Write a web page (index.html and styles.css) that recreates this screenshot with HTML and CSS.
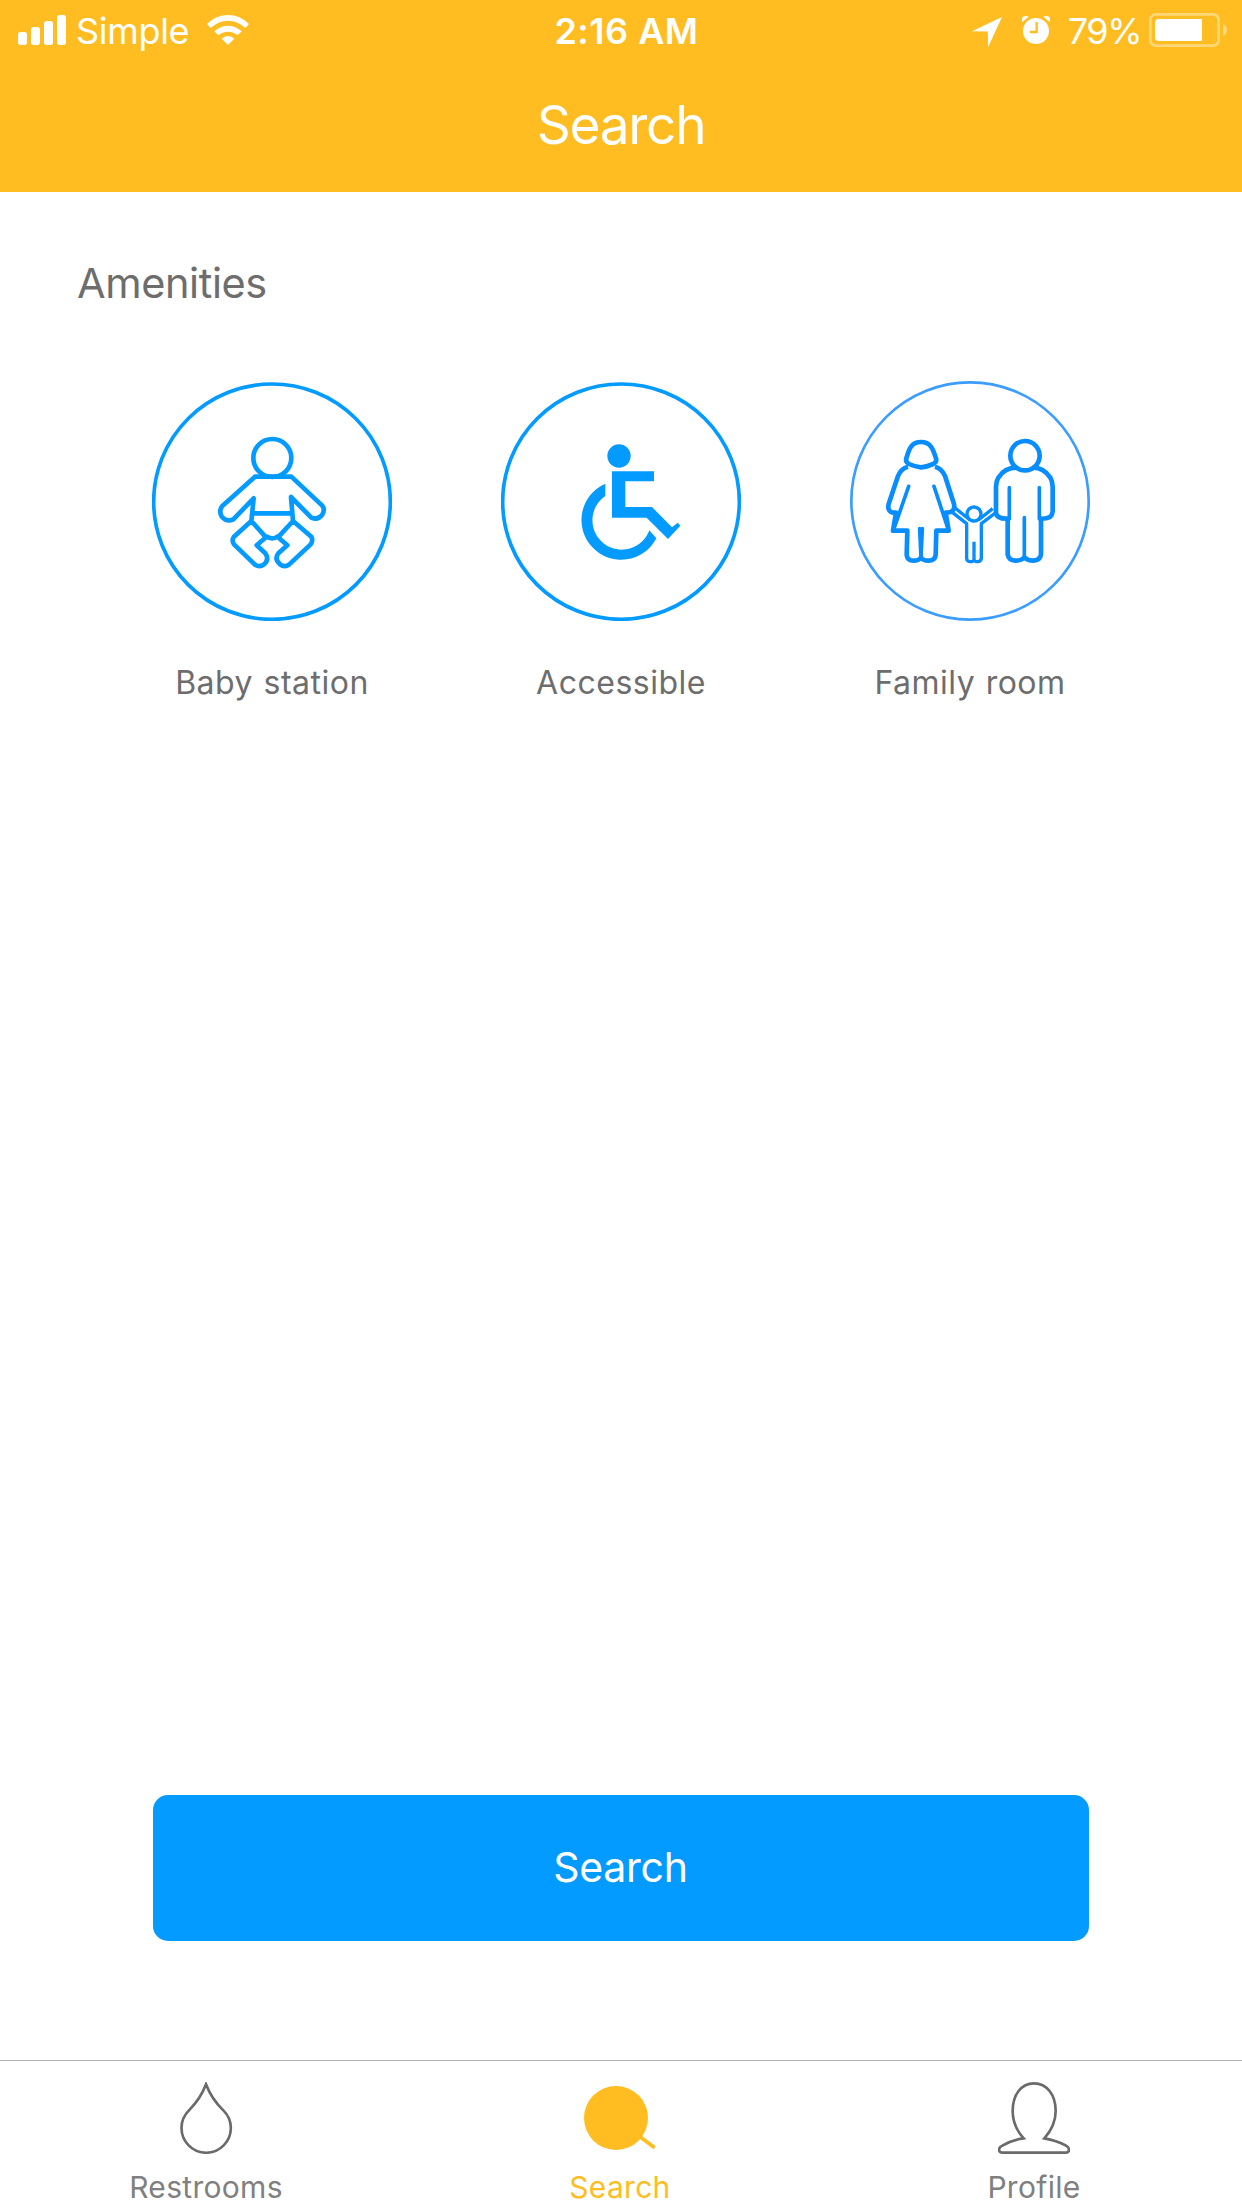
FILE: index.html
```html
<!DOCTYPE html>
<html lang="en">
<head>
  <meta charset="UTF-8">
  <meta name="viewport" content="width=device-width, initial-scale=1.0">
  <title>Search</title>
  <link rel="stylesheet" href="styles.css">
</head>
<body>

  <header class="header">
    <div class="status-bar">
      <div class="status-left">
        <svg class="signal" viewBox="0 0 48 30">
          <rect x="0" y="17" width="9" height="13" rx="2.7"/>
          <rect x="13" y="12" width="9" height="18" rx="2.7"/>
          <rect x="26" y="6" width="9" height="24" rx="2.7"/>
          <rect x="39" y="0" width="9" height="30" rx="2.7"/>
        </svg>
        <span class="carrier">Simple</span>
        <svg class="wifi" viewBox="621 45 126 90">
          <path d="M621 72Q648 45 684 45T747 72L736 84Q712 62 684 62T632 84Z"/>
          <path d="M643 94Q661 77 684 77T725 94L713 106Q700 95 684 95T655 106Z"/>
          <path d="M665 116Q673 108 684 108T703 116L684 135Z"/>
        </svg>
      </div>
      <span class="time">2:16 AM</span>
      <div class="status-right">
        <svg class="location" viewBox="66 46 91 91">
          <path d="M157 46L115 137L114 90L66 89Z"/>
        </svg>
        <svg class="alarm" viewBox="216 48 84 84">
          <circle cx="258" cy="93" r="39"/>
          <path d="M216 67V55Q218 48 227 48Q233 48 236 50ZM300 67V55Q298 48 289 48Q283 48 280 50Z"/>
          <path class="alarm-hands" d="M260 66V96H240"/>
        </svg>
        <span class="percent">79%</span>
        <svg class="battery" viewBox="597 39 234 102">
          <rect class="battery-shell" x="601" y="43" width="205" height="94" rx="17"/>
          <path class="battery-cap" d="M819 71Q831 77 831 90T819 109Z"/>
          <path d="M756 57H626Q615 57 615 68V112Q615 123 626 123H756Z"/>
        </svg>
      </div>
    </div>
    <h1 class="title">Search</h1>
  </header>

  <main class="content">
    <h2 class="section-title">Amenities</h2>

    <div class="amenities">
      <div class="amenity">
        <svg class="amenity-icon" viewBox="36 33 720 720">
          <ellipse class="ring" cx="396" cy="395" rx="355" ry="353"/>
          <g class="baby">
            <circle cx="397" cy="264" r="57"/>
            <path d="M345 320H454L546 406Q556 418 547 434Q534 452 514 443L453 381L459 453L514 500Q520 512 512 523L448 583Q434 594 420 583Q402 567 415 550L442 526L414 502L459 453M345 320L247 408Q235 423 246 441Q261 457 280 448L341 385L334 453L282 500Q274 512 282 523L344 583Q358 594 372 583Q389 567 376 550L350 526L378 502L334 453M338 430H456M378 499Q397 511 414 499"/>
          </g>
        </svg>
        <div class="amenity-name">Baby station</div>
      </div>

      <div class="amenity">
        <svg class="amenity-icon" viewBox="33 33 720 720">
          <ellipse class="ring" cx="393" cy="395" rx="355" ry="353"/>
          <g class="wheelchair">
            <circle cx="387" cy="258" r="35"/>
            <path d="M366 304H492V334H406V411H486L546 472L563 458L571 467L534 507L470 443H366Z"/>
            <path d="M346 341V378A88 88 0 1 0 478 481L499 505A119 119 0 1 1 346 341Z"/>
          </g>
        </svg>
        <div class="amenity-name">Accessible</div>
      </div>

      <div class="amenity">
        <svg class="amenity-icon" viewBox="30 33 720 720">
          <circle class="ring ring-thin" cx="390" cy="393" r="356"/>
          <g class="family">
            <!-- woman -->
            <path d="M207 282Q194 275 200 262C207 237 214 216 243 216S279 237 287 262Q293 275 280 282Q262 290 243 292Q224 290 207 282Z"/>
            <path d="M204 290Q183 295 174 318L146 402Q140 429 168 428L165 446L159 482H202L200 555Q202 572 221 572Q237 572 243 562Q249 572 265 572Q285 572 287 555L289 482H326L317 428Q347 429 342 402L315 318Q305 295 285 290"/>
            <path class="thin" d="M206 349L164 470M282 349L322 470M239 476L243 562L247 476"/>
            <!-- child -->
            <g class="child">
              <circle cx="402" cy="432" r="21"/>
              <path d="M338 428L380 461V566Q381 575 391 575Q400 575 402 569Q404 575 413 575Q422 575 424 566V461L466 429M344 413L390 450M458 416L415 450M402 515V568"/>
            </g>
            <!-- man -->
            <circle cx="555" cy="257" r="44"/>
            <path d="M529 293Q494 293 475 323Q468 335 468 350V429Q471 447 503 446V553Q506 571 526 572Q545 572 553 562Q563 572 580 572Q601 571 603 553V446Q636 448 638 425V350Q638 335 631 323Q611 293 579 293"/>
            <path class="thin" d="M508 353V447M598 353V447M553 443V562"/>
          </g>
        </svg>
        <div class="amenity-name">Family room</div>
      </div>
    </div>

    <button class="search-button" type="button">Search</button>
  </main>

  <nav class="tab-bar">
    <a class="tab">
      <svg class="tab-icon" viewBox="210 126 216 216">
        <path d="M318 133C306 165 285 193 267 211A74 74 0 1 0 370 211C351 193 330 165 318 133Z"/>
      </svg>
      <span class="tab-name">Restrooms</span>
    </a>
    <a class="tab active">
      <svg class="tab-icon" viewBox="132 126 216 216">
        <circle class="lens" cx="228" cy="234" r="96"/>
        <path d="M300 290L344 323"/>
      </svg>
      <span class="tab-name">Search</span>
    </a>
    <a class="tab">
      <svg class="tab-icon" viewBox="117 126 216 216">
        <path d="M194 295C176 275 161 247 161 213C161 164 187 130 225 130S290 164 290 213C290 247 274 275 256 295Q293 301 321 317Q330 322 330 329Q330 338 320 338H131Q120 338 120 329Q120 322 130 317Q160 299 194 295Z"/>
      </svg>
      <span class="tab-name">Profile</span>
    </a>
  </nav>

</body>
</html>
```

FILE: styles.css
```css
* {
  box-sizing: border-box;
}

body {
  font-family: Inter, 'Liberation Sans', sans-serif;
  background-color: #fff;
  color: #6d6d6d;
  margin: 0;
  height: 2208px;
  display: flex;
  flex-direction: column;
}

svg {
  display: block;
  flex: none;
}

/* Header */
.header {
  height: 192px;
  background-color: #ffbd21;
  color: #fff;
  fill: #fff;
}

.status-bar {
  height: 63px;
  padding: 0 15px 0 18px;
  display: grid;
  grid-template-columns: 1fr auto 1fr;
  align-items: center;
  font-size: 36px;
  line-height: 63px;
}

.status-left,
.status-right {
  display: flex;
  align-items: center;
}

.status-right {
  justify-content: flex-end;
}

.signal {
  width: 48px;
  height: 30px;
  margin-top: -3px;
}

.carrier {
  width: 129px;
  margin-left: 10px;
  letter-spacing: -0.3px;
}

.wifi {
  width: 42px;
  height: 30px;
  margin-left: 2px;
  margin-top: -3px;
}

.time {
  font-weight: 600;
  letter-spacing: 0.5px;
  padding-left: 8px;
}

.location {
  width: 30px;
  height: 30px;
  margin-right: 20px;
}

.alarm {
  width: 28px;
  height: 28px;
  margin-right: 18px;
  margin-top: -3px;
}

.alarm-hands {
  fill: none;
  stroke: #ffbd21;
  stroke-width: 7;
}

.percent {
  letter-spacing: -1.5px;
  margin-right: 8px;
}

.battery {
  width: 78px;
  height: 34px;
  margin-top: -3px;
}

.battery-shell {
  fill: none;
  stroke: rgba(255, 255, 255, 0.4);
  stroke-width: 8;
}

.battery-cap {
  fill: rgba(255, 255, 255, 0.4);
}

.title {
  margin: 0;
  font-size: 53px;
  font-weight: 400;
  letter-spacing: -1.2px;
  line-height: 124px;
  text-align: center;
}

/* Content */
.content {
  flex: 1;
  display: flex;
  flex-direction: column;
  padding: 60px 152px 119px;
}

.section-title {
  margin: 0 0 0 -75px;
  font-size: 41.5px;
  font-weight: 400;
  letter-spacing: -0.4px;
  line-height: 62px;
}

.amenities {
  display: flex;
  justify-content: space-between;
  margin-top: 67px;
}

.amenity {
  width: 240px;
}

.amenity-icon {
  width: 240px;
  height: 240px;
  fill: none;
  stroke: #039bff;
  stroke-linejoin: round;
}

.ring {
  stroke-width: 11;
}

.ring-thin {
  stroke: #3a9dff;
  stroke-width: 8;
}

.baby {
  stroke-width: 14;
  stroke-linecap: round;
}

.wheelchair {
  fill: #039bff;
  stroke: none;
}

.family {
  stroke: #078dff;
  stroke-width: 14;
}

.thin {
  stroke-width: 11;
  stroke-linecap: round;
}

.child {
  stroke-width: 10;
}

.amenity-name {
  margin-top: 38px;
  font-size: 32px;
  letter-spacing: 0.5px;
  word-spacing: 1px;
  line-height: 48px;
  text-align: center;
  white-space: nowrap;
}

.search-button {
  width: 936px;
  height: 146px;
  margin: auto 0 0 1px;
  padding: 0 1px 2px 0;
  border: none;
  border-radius: 15px;
  background-color: #039bff;
  color: #fff;
  font-family: inherit;
  font-size: 41px;
  letter-spacing: -0.3px;
}

/* Tab bar */
.tab-bar {
  height: 148px;
  border-top: 1px solid #b0b0b0;
  display: grid;
  grid-template-columns: repeat(3, 1fr);
}

.tab {
  display: flex;
  flex-direction: column;
  align-items: center;
  padding: 21px 2px 0 0;
  color: #808080;
}

.tab-icon {
  width: 72px;
  height: 72px;
  fill: none;
  stroke: #6a6a6a;
  stroke-width: 8;
}

.tab-name {
  margin-top: 13px;
  font-size: 30px;
  letter-spacing: 0.3px;
  line-height: 40px;
}

.tab.active {
  color: #ffbd21;
}

.active .tab-icon {
  stroke: #ffbd21;
  stroke-width: 11;
}

.lens {
  fill: #ffbd21;
  stroke: none;
}
```
